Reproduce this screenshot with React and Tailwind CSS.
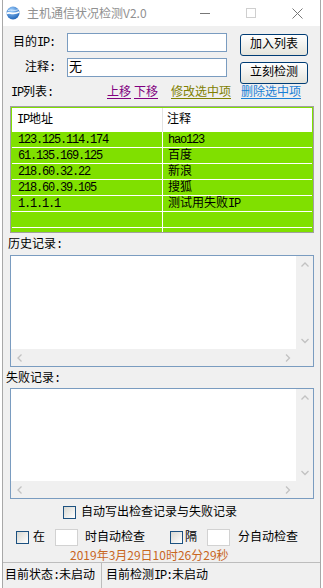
import React from "react";

const rows = [
  ["123.125.114.174", "hao123"],
  ["61.135.169.125", "百度"],
  ["218.60.32.22", "新浪"],
  ["218.60.39.105", "搜狐"],
  ["1.1.1.1", "测试用失败IP"],
  ["", ""],
  ["", ""],
];

// SimSun-ish text: ASCII runs are squeezed to half-width (6px)
const Sim = ({ t }) =>
  t
    .split(/([\x00-\x7f]+)/)
    .filter(Boolean)
    .map((s, i) =>
      /^[\x00-\x7f]+$/.test(s) ? (
        <span key={i} className="tracking-[-1.2px]">
          {s}
        </span>
      ) : (
        <span key={i}>{s}</span>
      )
    );

const Chevron = ({ dir }) => {
  const pts = {
    up: "0.5,4.5 4,1 7.5,4.5",
    down: "0.5,1 4,4.5 7.5,1",
    left: "4.5,0.5 1,4 4.5,7.5",
    right: "1,0.5 4.5,4 1,7.5",
  }[dir];
  const vertical = dir === "up" || dir === "down";
  return (
    <svg
      width={vertical ? 8 : 6}
      height={vertical ? 6 : 8}
      viewBox={vertical ? "0 0 8 6" : "0 0 6 8"}
    >
      <polyline points={pts} fill="none" stroke="#c2c2c2" strokeWidth="1.3" />
    </svg>
  );
};

const Memo = ({ className }) => (
  <div
    className={`ml-[7px] w-[304px] border border-[#7a9cc0] bg-[#f0f0f0] flex flex-col ${className}`}
  >
    <div className="flex flex-1">
      <div className="flex-1 bg-white" />
      <div className="w-[17px] flex flex-col justify-between">
        <div className="h-[17px] flex items-center justify-center">
          <Chevron dir="up" />
        </div>
        <div className="h-[17px] flex items-center justify-center">
          <Chevron dir="down" />
        </div>
      </div>
    </div>
    <div className="h-[17px] flex">
      <div className="flex-1 flex justify-between">
        <div className="w-[17px] flex items-center justify-center">
          <Chevron dir="left" />
        </div>
        <div className="w-[17px] flex items-center justify-center">
          <Chevron dir="right" />
        </div>
      </div>
      <div className="w-[17px]" />
    </div>
  </div>
);

const Box = () => (
  <span className="w-[13px] h-[13px] shrink-0 border border-[#1c5180] bg-linear-to-br from-[#d8d8d2] to-white" />
);

const Button = ({ children, className = "" }) => (
  <div
    className={`w-[68px] h-[22px] flex items-center justify-center rounded-[3px] border border-[#003c74] bg-linear-to-b from-white to-[#e4e4dc] ${className}`}
  >
    {children}
  </div>
);

export default function App() {
  return (
    <div className="w-[323px] h-[588px] bg-white overflow-hidden">
      <div className="ml-[2px] w-[319px] h-[588px] flex flex-col border-x border-[#a8a8a8] bg-[#f0f0f0] text-[12px] leading-[14px] text-black font-['Liberation_Mono','Noto_Sans_CJK_SC',monospace]">
        {/* title bar */}
        <div className="h-[26px] shrink-0 flex items-center bg-white pl-[3px]">
          <svg width="14" height="14" viewBox="0 0 14 14">
            <defs>
              <radialGradient id="gl" cx="40%" cy="30%" r="75%">
                <stop offset="0" stopColor="#9fd0ff" />
                <stop offset="1" stopColor="#1a5fb4" />
              </radialGradient>
            </defs>
            <circle cx="7" cy="7" r="6.5" fill="url(#gl)" />
            <path
              d="M0.8 7.6 C3.5 5.2 6 9.6 13.2 6"
              stroke="#fff"
              strokeWidth="1.8"
              fill="none"
            />
            <path
              d="M2 4.6 C5 3 8 5.5 12 3.8"
              stroke="#e8f4ff"
              strokeWidth="0.8"
              fill="none"
            />
          </svg>
          <span className="ml-[7px] text-[12px] text-[#909090] font-['Noto_Sans_CJK_SC',sans-serif]">
            主机通信状况检测V2.0
          </span>
          <div className="ml-auto flex h-full">
            <div className="w-[46px] flex items-center justify-center">
              <svg width="10" height="10" viewBox="0 0 10 10">
                <line x1="0" y1="5.5" x2="10" y2="5.5" stroke="#777" strokeWidth="1" />
              </svg>
            </div>
            <div className="w-[46px] flex items-center justify-center">
              <svg width="10" height="10" viewBox="0 0 10 10">
                <rect x="0.5" y="0.5" width="9" height="9" fill="none" stroke="#cfcfcf" strokeWidth="1" />
              </svg>
            </div>
            <div className="w-[46px] flex items-center justify-center">
              <svg width="11" height="11" viewBox="0 0 11 11">
                <line x1="0.5" y1="0.5" x2="10.5" y2="10.5" stroke="#777" strokeWidth="1" />
                <line x1="10.5" y1="0.5" x2="0.5" y2="10.5" stroke="#777" strokeWidth="1" />
              </svg>
            </div>
          </div>
        </div>

        {/* body */}
        <div className="flex-1 flex flex-col">
          <div className="flex pt-[7px]">
            <div className="flex flex-col pl-[8px]">
              <div className="flex items-center h-[19px]">
                <span className="w-[44px] text-right">
                  <Sim t="目的IP:" />
                </span>
                <div className="ml-[12px] w-[160px] h-[19px] border border-[#7a9cc0] bg-white" />
              </div>
              <div className="flex items-center h-[19px] mt-[6px]">
                <span className="w-[44px] text-right">
                  <Sim t="注释:" />
                </span>
                <div className="ml-[12px] w-[160px] h-[19px] border border-[#7a9cc0] bg-white flex items-center pl-[1px] text-[13px]">
                  无
                </div>
              </div>
            </div>
            <div className="flex flex-col ml-[13px] pt-[1px]">
              <Button>加入列表</Button>
              <Button className="mt-[6px]">立刻检测</Button>
            </div>
          </div>

          <div className="mt-[2px] h-[14px] flex items-center pl-[8px]">
            <span className="w-[96px]">
              <Sim t="IP列表:" />
            </span>
            <span className="w-[24px] text-[#800080] underline underline-offset-[2px]">上移</span>
            <span className="ml-[3px] w-[24px] text-[#800080] underline underline-offset-[2px]">下移</span>
            <span className="ml-[13px] w-[60px] text-[#808000] underline underline-offset-[2px]">修改选中项</span>
            <span className="ml-[10px] w-[60px] text-[#1a7fd6] underline underline-offset-[2px]">删除选中项</span>
          </div>

          {/* list view */}
          <div className="mt-[6px] ml-[7px] w-[304px] h-[127px] border border-[#a0a0a0] p-[1px] bg-[#80e000] overflow-hidden">
            <div className="h-[24px] flex bg-white">
              <div className="w-[151px] border-r border-[#e3e3e3] pl-[5px] flex items-center">
                <Sim t="IP地址" />
              </div>
              <div className="flex-1 pl-[4px] flex items-center">注释</div>
            </div>
            {rows.map(([ip, note], i) => (
              <div key={i} className="h-[16px] shrink-0 flex border-b border-white">
                <div className="w-[151px] border-r border-white pl-[6px] flex items-center">
                  <Sim t={ip} />
                </div>
                <div className="flex-1 pl-[5px] flex items-center">
                  <Sim t={note} />
                </div>
              </div>
            ))}
          </div>

          <div className="mt-[5px] h-[14px] pl-[5px]">历史记录:</div>
          <Memo className="mt-[3px] h-[112px]" />

          <div className="mt-[5px] h-[14px] pl-[3px]">失败记录:</div>
          <Memo className="mt-[2px] h-[111px]" />

          <div className="mt-[7px] h-[13px] flex items-center pl-[60px]">
            <Box />
            <span className="ml-[5px]">自动写出检查记录与失败记录</span>
          </div>

          <div className="mt-[10px] h-[17px] flex items-center pl-[13px]">
            <Box />
            <span className="ml-[4px]">在</span>
            <div className="ml-[10px] w-[23px] h-[17px] border border-[#d2d2d2] bg-white" />
            <span className="ml-[7px]">时自动检查</span>
            <span className="ml-[25px] flex">
              <Box />
            </span>
            <span className="ml-[2px]">隔</span>
            <div className="ml-[10px] w-[23px] h-[17px] border border-[#d2d2d2] bg-white" />
            <span className="ml-[8px]">分自动检查</span>
          </div>

          <div className="mt-[2px] h-[14px] pl-[67px] text-[#c8661e] font-['Noto_Sans_CJK_SC',sans-serif] leading-[14px]">
            2019年3月29日10时26分29秒
          </div>
        </div>

        {/* status bar */}
        <div className="h-[26px] shrink-0 flex border-t border-[#bdbdbd]">
          <div className="w-[99px] border-r border-[#bdbdbd] pl-[2px] flex items-center">
            <Sim t="目前状态:未启动" />
          </div>
          <div className="pl-[4px] flex items-center">
            <Sim t="目前检测IP:未启动" />
          </div>
        </div>
      </div>
    </div>
  );
}
